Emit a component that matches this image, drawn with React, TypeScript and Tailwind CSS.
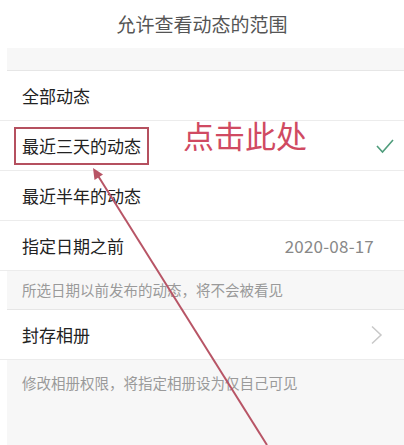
const font = { fontFamily: '"Noto Sans CJK SC", "Noto Sans", sans-serif' };

function Row({ children, right }: { children: React.ReactNode; right?: React.ReactNode }) {
  return (
    <div className="flex h-[50px] items-center justify-between border-b border-[#ececec] bg-white pl-[22px] pr-[10px]">
      {children}
      {right}
    </div>
  );
}

export default function App() {
  return (
    <div className="relative h-[445px] w-[404px] overflow-hidden bg-white" style={font}>
      <header className="flex h-[48px] items-center justify-center">
        <h1 className="text-[19px] text-[#555]">允许查看动态的范围</h1>
      </header>
      <div className="ml-[7px] h-[23px] border-b border-[#e6e6e6] bg-[#f7f7f7]" />
      <div className="text-[17px] text-[#222]">
        <Row>
          <span>全部动态</span>
        </Row>
        <Row
          right={
            <svg width="20" height="16" viewBox="0 0 20 16" className="mr-[-1px]">
              <polyline points="2,8 7.5,14 18,2" fill="none" stroke="#4f9d7c" strokeWidth="1.6" />
            </svg>
          }
        >
          <div className="flex items-center">
            <span className="ml-[-8px] flex h-[38px] items-center border-2 border-[#b5505f] px-[6px]">最近三天的动态</span>
            <span className="mb-[22px] ml-[34px] text-[31px] leading-none text-[#d04a62]">点击此处</span>
          </div>
        </Row>
        <Row>
          <span>最近半年的动态</span>
        </Row>
        <Row right={<span className="mr-[20px] text-[17px] tracking-[0.2px] text-[#888]">2020-08-17</span>}>
          <span>指定日期之前</span>
        </Row>
      </div>
      <div className="ml-[7px] flex h-[39px] items-center border-b border-[#e6e6e6] bg-[#f7f7f7] pl-[15px] text-[14.5px] text-[#9a9a9a]">
        所选日期以前发布的动态，将不会被看见
      </div>
      <div className="text-[17px] text-[#222]">
        <Row
          right={
            <svg width="14" height="20" viewBox="0 0 14 20" className="mr-[10px]">
              <polyline points="2,1.5 11,10 2,18.5" fill="none" stroke="#c8c8c8" strokeWidth="1.5" />
            </svg>
          }
        >
          <span>封存相册</span>
        </Row>
      </div>
      <div className="ml-[7px] h-full bg-[#f7f7f7] pl-[15px] pt-[12px] text-[14.5px] text-[#9a9a9a]">
        修改相册权限，将指定相册设为仅自己可见
      </div>
      <svg className="pointer-events-none absolute left-0 top-0" width="404" height="445">
        <line x1="267" y1="445" x2="95" y2="171" stroke="#b85566" strokeWidth="2" />
        <polygon points="93,168 94.5,180 103,174.5" fill="#b85566" />
      </svg>
    </div>
  );
}
